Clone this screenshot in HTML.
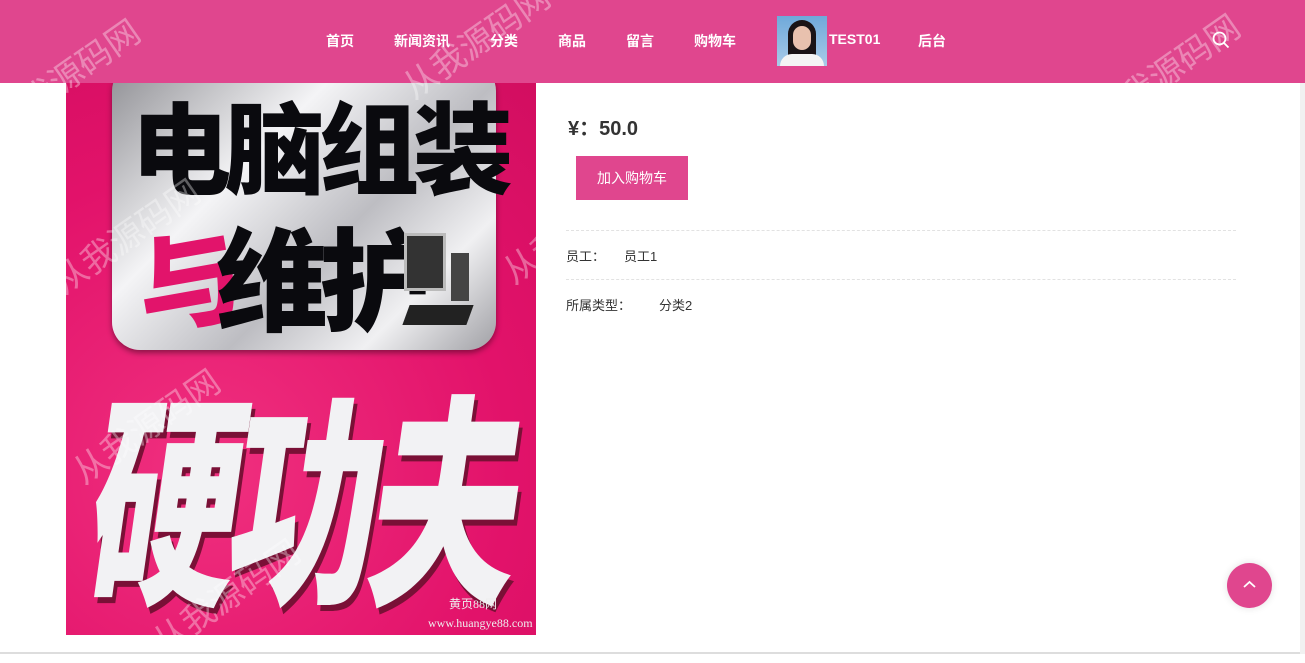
<!DOCTYPE html>
<html><head><meta charset="utf-8">
<style>
*{margin:0;padding:0;box-sizing:border-box}
body{width:1305px;height:654px;overflow:hidden;background:#fff;font-family:"Liberation Sans","Noto Sans CJK SC",sans-serif;position:relative}
.hdr{position:absolute;left:0;top:0;width:1305px;height:83px;background:#e0468e}
.nav{position:absolute;top:31px;color:#fff;font-size:14px;font-weight:bold}
.av{position:absolute;left:777px;top:16px;width:50px;height:50px;background:linear-gradient(#6fa9da,#a9cbe8);overflow:hidden}
.av .hair{position:absolute;left:11px;top:4px;width:28px;height:40px;background:#1a1416;border-radius:14px 14px 4px 4px}
.av .face{position:absolute;left:16px;top:10px;width:18px;height:24px;background:#e8c1ae;border-radius:9px}
.av .sh{position:absolute;left:3px;top:38px;width:44px;height:14px;background:#f4f4f4;border-radius:12px 12px 0 0}
.img{position:absolute;left:66px;top:83px;width:470px;height:552px;background:radial-gradient(circle at 30% 70%,#f0307f,#e2126a 60%,#d20e60);overflow:hidden}
.panel{position:absolute;left:46px;top:-20px;width:384px;height:287px;border-radius:28px;background:linear-gradient(135deg,#8e8e93,#f4f4f6 35%,#bdbdc2 60%,#f0f0f2 80%,#a0a0a5);box-shadow:0 3px 6px rgba(0,0,0,.4)}
.big{position:absolute;font-weight:900;font-family:"Noto Sans CJK SC",sans-serif;line-height:1;white-space:nowrap}
.wm{position:absolute;color:rgba(255,255,255,.35);font-size:34px;transform:rotate(-35deg);font-family:"Noto Sans CJK SC",sans-serif;white-space:nowrap}
.price{position:absolute;left:568px;top:112px;font-size:20px;font-weight:bold;color:#333}
.btn{position:absolute;left:576px;top:156px;width:112px;height:44px;background:#e0468e;color:#fff;font-size:14px;line-height:44px;text-align:center}
.line{position:absolute;left:566px;width:670px;border-top:1px dashed #e2e2e2}
.t{position:absolute;font-size:13px;color:#333}
.top{position:absolute;left:1227px;top:563px;width:45px;height:45px;border-radius:50%;background:#e0468e;box-shadow:0 0 8px rgba(0,0,0,.12)}
</style></head><body>
<div class="img">
 <div class="panel"></div>
 <div class="big" style="left:65px;top:10px;font-size:100px;color:#0a0a0e;letter-spacing:-6px">电脑组装</div>
 <div class="big" style="left:70px;top:140px;font-size:105px;color:#e2146b;transform:rotate(-10deg)">与</div>
 <div class="big" style="left:150px;top:135px;font-size:112px;color:#0a0a0e;letter-spacing:-8px">维护</div>
 <div style="position:absolute;left:338px;top:150px;width:42px;height:58px;background:#333;border:3px solid #bbb"></div>
 <div style="position:absolute;left:385px;top:170px;width:18px;height:48px;background:#444"></div>
 <div style="position:absolute;left:340px;top:222px;width:64px;height:20px;background:#222;transform:skewX(-20deg)"></div>
 <div class="big" style="left:45px;top:295px;font-size:150px;color:#f2f2f4;letter-spacing:-10px;transform:skewX(-8deg) scaleY(1.5);transform-origin:top left;text-shadow:4px 4px 0 #7a1036">硬功夫</div>
 <div style="position:absolute;left:383px;top:512px;font-size:12px;color:#eee;font-family:'Liberation Serif',serif">黄页88网</div>
 <div style="position:absolute;left:362px;top:533px;font-size:12px;color:#eee;font-family:'Liberation Serif',serif">www.huangye88.com</div>
</div>
<div class="hdr">
 <span class="nav" style="left:326px">首页</span>
 <span class="nav" style="left:394px">新闻资讯</span>
 <span class="nav" style="left:490px">分类</span>
 <span class="nav" style="left:558px">商品</span>
 <span class="nav" style="left:626px">留言</span>
 <span class="nav" style="left:694px">购物车</span>
 <div class="av"><div class="hair"></div><div class="face"></div><div class="sh"></div></div>
 <span class="nav" style="left:829px">TEST01</span>
 <span class="nav" style="left:918px">后台</span>
 <svg style="position:absolute;left:1212px;top:31px" width="18" height="18" viewBox="0 0 18 18"><circle cx="7.5" cy="7.5" r="6" fill="none" stroke="#fff" stroke-width="1.8"/><line x1="12" y1="12" x2="16.5" y2="16.5" stroke="#fff" stroke-width="1.8"/></svg>
</div>
<div class="wm" style="left:-20px;top:50px">从我源码网</div>
<div class="wm" style="left:390px;top:15px">从我源码网</div>
<div class="wm" style="left:1080px;top:45px">从我源码网</div>
<div class="wm" style="left:40px;top:210px">从我源码网</div>
<div class="wm" style="left:490px;top:200px">从我源码网</div>
<div class="wm" style="left:60px;top:400px">从我源码网</div>
<div class="wm" style="left:140px;top:570px">从我源码网</div>
<div class="price">¥：50.0</div>
<div class="btn">加入购物车</div>
<div class="line" style="top:230px"></div>
<div class="t" style="left:566px;top:246px">员工：</div><div class="t" style="left:624px;top:246px">员工1</div>
<div class="line" style="top:279px"></div>
<div class="t" style="left:566px;top:295px">所属类型：</div><div class="t" style="left:659px;top:295px">分类2</div>
<div class="top"><svg style="position:absolute;left:15px;top:16px" width="15" height="10" viewBox="0 0 15 10"><polyline points="2,8 7.5,3 13,8" fill="none" stroke="#fff" stroke-width="1.8"/></svg></div>
<div style="position:absolute;left:0;top:652px;width:1305px;height:2px;background:#ddd"></div>
<div style="position:absolute;left:1300px;top:83px;width:5px;height:571px;background:#f1f1f1"></div>
</body></html>
